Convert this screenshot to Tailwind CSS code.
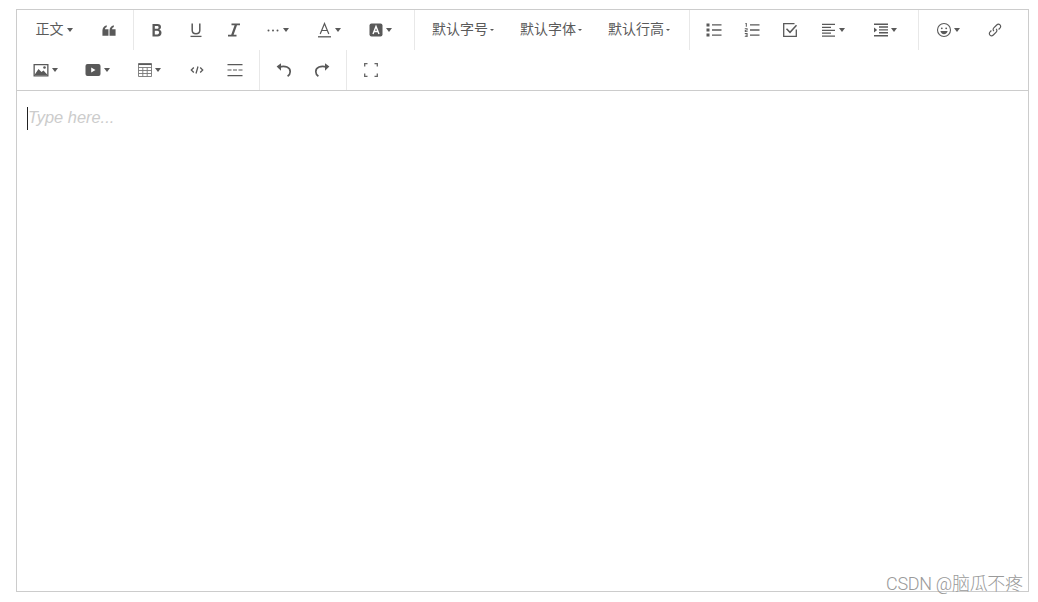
<!DOCTYPE html>
<html lang="zh-CN">
<head>
    <meta charset="UTF-8">
    <title>Editor</title>
    <script src="https://cdn.jsdelivr.net/npm/@tailwindcss/browser@4"></script>
</head>
<body class="bg-white font-['Liberation_Sans','Noto_Sans_CJK_SC',sans-serif] text-[#595959]">
<div class="relative h-[602px] w-[1038px] overflow-hidden pl-4 pt-[9px]">
    <div class="flex h-[583px] w-[1013px] flex-col border border-[#ccc]">
        <!-- toolbar -->
        <div class="h-[81px] border-b border-[#ccc]">
            <!-- row 1 -->
            <div class="flex h-10">
                <div class="flex w-[117px] border-r border-[#e8e8e8]">
                    <button class="flex h-10 w-[74px] items-center justify-center gap-[3px] text-sm"><span class="pb-[2px] opacity-[.99]">正文</span><i class="border-x-[3.5px] border-t-[4px] border-x-transparent border-t-[#595959]"></i></button>
                    <button class="flex h-10 w-[36px] items-center justify-center">
                        <svg class="h-[14px] w-[14px]" viewBox="0 0 16 16" fill="#595959"><path d="M.5 14.500V8.600C.5 5.600 2.200 3.400 5.400 2.500v2.200C4.200 5.200 3.500 6 3.400 7.200H7.400V14.500zM8.600 14.500V8.600c0-3 1.700-5.200 4.900-6.100v2.200c-1.200.5-1.900 1.300-2 2.500H15.500V14.500z"/></svg>
                    </button>
                </div>
                <div class="flex w-[281px] border-r border-[#e8e8e8] pl-1">
                    <button class="flex h-10 w-[38px] items-center justify-center">
                        <svg class="h-4 w-4" viewBox="0 0 16 16" fill="#595959"><path fill-rule="evenodd" d="M3.500 2h5c2.300 0 3.500 1.100 3.500 3 0 1.200-.6 2.200-1.700 2.700 1.500.4 2.200 1.500 2.200 3 0 2.100-1.400 3.800-3.900 3.800H3.500zM5.800 4v2.800h2.200c1 0 1.600-.5 1.600-1.400S9 4 8 4zM5.800 8.800v3.600h2.500c1.100 0 1.800-.7 1.800-1.800s-.7-1.800-1.800-1.800z"/></svg>
                    </button>
                    <button class="flex h-10 w-[39px] items-center justify-center">
                        <svg class="h-4 w-4" viewBox="0 0 16 16" fill="none" stroke="#595959"><path stroke-width="1.500" d="M4.200 1.500v6.700c0 2.200 1.500 3.500 3.800 3.500s3.800-1.300 3.800-3.500V1.500"/><path stroke-width="1.300" d="M2.500 14.400h11"/></svg>
                    </button>
                    <button class="flex h-10 w-[38px] items-center justify-center">
                        <svg class="h-4 w-4" viewBox="0 0 16 16" fill="#595959"><path d="M5.500 1.500h8.500v1.800h-3l-3.400 9.400H10.500v1.800H2v-1.800h3.200l3.400-9.400H5.500z"/></svg>
                    </button>
                    <button class="flex h-10 w-[50px] items-center justify-center gap-1">
                        <svg class="h-4 w-[12px]" viewBox="0 0 12 16" fill="#595959"><circle cx="1.500" cy="8.500" r="1"/><circle cx="6" cy="8.500" r="1"/><circle cx="10.500" cy="8.500" r="1"/></svg>
                        <i class="border-x-[3.5px] border-t-[4px] border-x-transparent border-t-[#595959]"></i>
                    </button>
                    <button class="flex h-10 w-[53px] items-center justify-center gap-1">
                        <svg class="h-4 w-[13px]" viewBox="0 0 13 16" fill="none" stroke="#595959"><path stroke-width="1.200" d="M2.200 12 6.500 1.500 10.800 12M3.700 8.500h5.600"/><path stroke-width="1.300" d="M0 14.800h13"/></svg>
                        <i class="border-x-[3.5px] border-t-[4px] border-x-transparent border-t-[#595959]"></i>
                    </button>
                    <button class="flex h-10 w-[48px] items-center justify-center gap-[3px]">
                        <svg class="h-[14px] w-[14px]" viewBox="0 0 14 14"><rect x="0.500" y=".5" width="13" height="13" rx="2" fill="#595959"/><path d="M4 11 7 3.500l3 7.500M5 8.500h4" fill="none" stroke="#fff" stroke-width="1.400"/></svg>
                        <i class="border-x-[3.5px] border-t-[4px] border-x-transparent border-t-[#595959]"></i>
                    </button>
                </div>
                <div class="flex w-[275px] border-r border-[#e8e8e8] pl-1 text-sm">
                    <button class="flex h-10 w-[88px] items-center justify-center gap-[2px]"><span class="pb-[2px] opacity-[.99]">默认字号</span><i class="border-x-[2px] border-t-[2px] border-x-transparent border-t-[#595959]"></i></button>
                    <button class="flex h-10 w-[88px] items-center justify-center gap-[2px]"><span class="pb-[2px] opacity-[.99]">默认字体</span><i class="border-x-[2px] border-t-[2px] border-x-transparent border-t-[#595959]"></i></button>
                    <button class="flex h-10 w-[88px] items-center justify-center gap-[2px]"><span class="pb-[2px] opacity-[.99]">默认行高</span><i class="border-x-[2px] border-t-[2px] border-x-transparent border-t-[#595959]"></i></button>
                </div>
                <div class="flex w-[229px] border-r border-[#e8e8e8] pl-[5px]">
                    <button class="flex h-10 w-[38px] items-center justify-center">
                        <svg class="h-4 w-4" viewBox="0 0 16 16" fill="#595959"><rect x="0.500" y="1.500" width="3" height="3"/><rect x="0.500" y="6.500" width="3" height="3"/><rect x="0.500" y="11.500" width="3" height="3"/><path d="M6 2.200h9.500v1.400H6zM6 7.300h9.500v1.400H6zM6 12.400h9.500v1.400H6z"/></svg>
                    </button>
                    <button class="flex h-10 w-[38px] items-center justify-center">
                        <svg class="h-4 w-4" viewBox="0 0 16 16" fill="#595959"><path d="M6 2.200h9.500v1.400H6zM6 7.300h9.500v1.400H6zM6 12.400h9.500v1.400H6z"/><path d="M1.800 1h1v3.800h-1V2H1zM.8 6.200h2.800v2.300H1.800v.7h1.800V10H.8V7.800h1.800v-.8H.8zM.8 11.100h2.800V15H.8v-.8h1.800v-.8H1.300v-.7h1.300v-.8H.8z"/></svg>
                    </button>
                    <button class="flex h-10 w-[38px] items-center justify-center">
                        <svg class="h-4 w-4" viewBox="0 0 16 16" fill="none" stroke="#595959" stroke-width="1.300"><path d="M14.300 7.500v6.800H1.700V1.700h10.800"/><path stroke-width="1.500" d="M4.500 6.800 8 10.300l6.500-7"/></svg>
                    </button>
                    <button class="flex h-10 w-[48px] items-center justify-center gap-[3px]">
                        <svg class="h-[14px] w-[14px]" viewBox="0 0 14 14" fill="#595959"><path d="M0 .8h13v1.200H0zM0 3.800h9v1.200H0zM0 6.700h13v1.200H0zM0 9.600h9v1.200H0zM0 12.500h13v1.200H0z"/></svg>
                        <i class="border-x-[3.5px] border-t-[4px] border-x-transparent border-t-[#595959]"></i>
                    </button>
                    <button class="flex h-10 w-[56px] items-center justify-center gap-[3px]">
                        <svg class="h-[14px] w-[14px]" viewBox="0 0 14 14" fill="#595959"><path d="M0 .5h14v1.500H0zM5 3.300h9v1.400H5zM5 6.200h9v1.400H5zM5 9.100h9v1.400H5zM0 12h14v1.500H0zM0 4.400 3.200 7 0 9.600z"/></svg>
                        <i class="border-x-[3.5px] border-t-[4px] border-x-transparent border-t-[#595959]"></i>
                    </button>
                </div>
                <div class="flex pl-[5px]">
                    <button class="flex h-10 w-[48px] items-center justify-center gap-[2px]">
                        <svg class="h-4 w-4" viewBox="0 0 16 16" fill="none" stroke="#595959" stroke-width="1.100"><circle cx="8" cy="8" r="6.500"/><circle cx="5.800" cy="6.300" r=".9" fill="#595959" stroke="none"/><circle cx="10.200" cy="6.300" r=".9" fill="#595959" stroke="none"/><path fill="#595959" stroke="none" d="M4.400 9h7.200c-.3 2-1.800 3.200-3.600 3.200S4.700 11 4.400 9z"/></svg>
                        <i class="border-x-[3.5px] border-t-[4px] border-x-transparent border-t-[#595959]"></i>
                    </button>
                    <button class="flex h-10 w-[46px] items-center justify-center">
                        <svg class="h-4 w-4" viewBox="0 0 16 16" fill="none" stroke="#595959" stroke-width="1.200"><path d="M6.900 9.100c-1.100-1-1-2.300-.1-3.200l2.900-2.900c1-1 2.400-1 3.300-.1s.9 2.300-.1 3.300l-1.300 1.300"/><path d="M9.100 6.900c1.100 1 1 2.300.1 3.200l-2.900 2.900c-1 1-2.400 1-3.300.1s-.9-2.300.1-3.300l1.300-1.300"/></svg>
                    </button>
                </div>
            </div>
            <!-- row 2 -->
            <div class="flex h-10">
                <div class="flex w-[243px] border-r border-[#e8e8e8] pl-[2px]">
                    <button class="flex h-10 w-[52px] items-center justify-center gap-[3px]">
                        <svg class="h-4 w-4" viewBox="0 0 16 16"><path fill="#595959" fill-rule="evenodd" d="M.5 2h15v12.500H.5zM1.800 3.300v9.900h12.400V3.300z"/><path fill="#595959" d="M1.800 12.500 5.500 7l3 3 2-1.600 3.700 4v.8H1.800z"/><circle cx="11.500" cy="5.500" r="1.300" fill="#595959"/></svg>
                        <i class="border-x-[3.5px] border-t-[4px] border-x-transparent border-t-[#595959]"></i>
                    </button>
                    <button class="flex h-10 w-[52px] items-center justify-center gap-[3px]">
                        <svg class="h-4 w-4" viewBox="0 0 16 16"><rect x=".5" y="2" width="15" height="12" rx="2" fill="#595959"/><path d="M6.200 5.500v5L10.500 8z" fill="#fff"/></svg>
                        <i class="border-x-[3.5px] border-t-[4px] border-x-transparent border-t-[#595959]"></i>
                    </button>
                    <button class="flex h-10 w-[55px] items-center justify-center gap-[3px] pr-[3px]">
                        <svg class="h-[14px] w-[14px]" viewBox="0 0 14 14" fill="none" stroke="#777" stroke-width=".9"><path d="M.5.5h13v13H.5zM.5 4.500h13M.5 7.500h13M.5 10.500h13M4.800 4.500v9M9.200 4.500v9"/><path stroke="#595959" stroke-width="1.500" d="M.5 1.300h13"/></svg>
                        <i class="border-x-[3.5px] border-t-[4px] border-x-transparent border-t-[#595959]"></i>
                    </button>
                    <button class="flex h-10 w-[38px] items-center justify-center">
                        <svg class="h-[14px] w-[14px]" viewBox="0 0 14 14" fill="none" stroke="#595959" stroke-width="1.300"><path d="M3.800 4.500 1.300 7l2.500 2.500M10.200 4.500 12.700 7l-2.500 2.500M8 3.500 6 10.500"/></svg>
                    </button>
                    <button class="flex h-10 w-[38px] items-center justify-center">
                        <svg class="h-4 w-4" viewBox="0 0 16 16" fill="#595959"><path d="M.5 2h15v1.200H.5zM.5 7.400h4v1.200h-4zM6 7.400h4v1.200H6zM11.500 7.400h4v1.200h-4zM.5 13h15v1.200H.5z"/></svg>
                    </button>
                </div>
                <div class="flex w-[87px] border-r border-[#e8e8e8] pl-[5px]">
                    <button class="flex h-10 w-[38px] items-center justify-center">
                        <svg class="h-4 w-4" viewBox="0 0 16 16" fill="none" stroke="#595959" stroke-width="1.700"><path d="M4 4.800C9 3.700 14.200 5 14.200 9.700c0 1.900-1 3.400-2.600 4.500"/><path fill="#595959" stroke="none" d="M5 1.200v7.600L.6 4.400z"/></svg>
                    </button>
                    <button class="flex h-10 w-[38px] items-center justify-center">
                        <svg class="h-4 w-4" viewBox="0 0 16 16" fill="none" stroke="#595959" stroke-width="1.700"><path d="M12 4.800C7 3.700 1.800 5 1.800 9.700c0 1.900 1 3.400 2.600 4.500"/><path fill="#595959" stroke="none" d="M11 1.200v7.600l4.400-4.400z"/></svg>
                    </button>
                </div>
                <div class="flex pl-[5px]">
                    <button class="flex h-10 w-[38px] items-center justify-center">
                        <svg class="h-[14px] w-[14px]" viewBox="0 0 14 14" fill="none" stroke="#666" stroke-width="1.300"><path d="M.7 3.500V.7h2.800M10.500.7h2.800v2.800M13.300 10.500v2.800h-2.800M3.500 13.300H.7v-2.800"/></svg>
                    </button>
                </div>
            </div>
        </div>
        <!-- editing area -->
        <div class="flex-1 px-[10px] pt-4">
            <div class="flex h-[23px] items-center border-l border-[#222]">
                <span class="pb-[2px] text-[16.4px] italic text-[#ccc] opacity-[.99]">Type here...</span>
            </div>
        </div>
    </div>
    <div class="absolute left-[886px] top-[572px] whitespace-nowrap font-['Roboto','Noto_Sans_CJK_SC',sans-serif] text-[18px] leading-6 font-light tracking-[-.3px] text-[#999] opacity-[.99]">CSDN @脑瓜不疼</div>
</div>
</body>
</html>
